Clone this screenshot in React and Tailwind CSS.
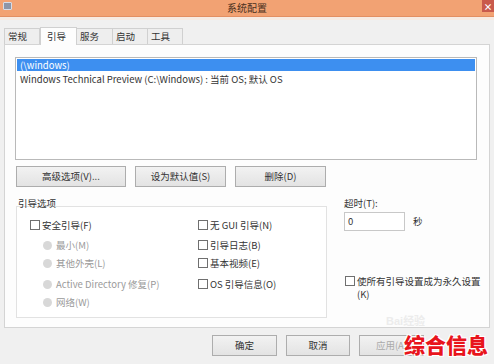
import React from "react";

const F = { fontFamily: '"Noto Sans CJK SC", "Liberation Sans", sans-serif' };

function Check({ className = "" }) {
  return <span className={"inline-block w-[10px] h-[10px] border border-[#6f6f6f] bg-white shrink-0 " + className} />;
}
function Radio() {
  return <span className="inline-block w-[9px] h-[9px] rounded-full bg-[#d8d8d8] shrink-0" />;
}
function Btn({ children, className = "" }) {
  return (
    <div className={"h-[21px] flex items-center justify-center border border-[#adadad] bg-gradient-to-b from-[#f2f2f2] to-[#e3e3e3] text-[9.5px] text-[#333] " + className}>
      {children}
    </div>
  );
}

export default function App() {
  return (
    <div className="w-[494px] h-[364px] bg-[#f0f0f0] flex flex-col overflow-hidden relative" style={F}>
      {/* title bar */}
      <div className="h-[17px] bg-[#f2a273] border-b border-[#e28f63] relative flex items-center justify-center shrink-0">
        <div className="absolute left-[3px] top-[2px] w-[9px] h-[8px] bg-[#8d96a8] border border-[#d8dce6] rounded-[1px]" />
        <span className="text-[10px] text-[#4a3020] leading-none">系统配置</span>
        <div className="absolute right-0 top-0 w-[12px] h-[12px] bg-[#c95a4c] flex items-center justify-center text-white text-[9px] leading-none font-bold">×</div>
      </div>
      <div className="h-[3px] bg-[#f7ebe3] shrink-0" />
      {/* tabs */}
      <div className="flex items-end pl-[4px] h-[24px] shrink-0">
        <div className="w-[36px] h-[16px] border border-b-0 border-[#d0d0d0] bg-[#eeeeee] text-[9.5px] text-[#333] flex items-center pl-[3px]">常规</div>
        <div className="w-[37px] h-[18px] border border-b-0 border-[#d0d0d0] bg-[#fdfdfd] text-[9.5px] text-[#333] flex items-center pl-[6px] relative z-10 -mb-px">引导</div>
        <div className="w-[36px] h-[16px] border border-b-0 border-l-0 border-[#d0d0d0] bg-[#eeeeee] text-[9.5px] text-[#333] flex items-center pl-[3px]">服务</div>
        <div className="w-[35px] h-[16px] border border-b-0 border-l-0 border-[#d0d0d0] bg-[#eeeeee] text-[9.5px] text-[#333] flex items-center pl-[3px]">启动</div>
        <div className="w-[35px] h-[16px] border border-b-0 border-l-0 border-[#d0d0d0] bg-[#eeeeee] text-[9.5px] text-[#333] flex items-center pl-[3px]">工具</div>
      </div>
      {/* panel */}
      <div className="ml-[4px] w-[486px] h-[284px] border border-[#d4d4d4] bg-[#fdfdfd] shrink-0 pl-[10px] pt-[12px] flex flex-col">
        {/* list */}
        <div className="w-[462px] h-[103px] border border-[#b9b9b9] bg-white p-px flex flex-col">
          <div className="h-[12px] bg-[#3d8ff0] text-white text-[9.5px] leading-[12px] pl-[3px]">{"(\\windows)"}</div>
          <div className="text-[9.5px] text-[#333] leading-[14px] pl-[3px] mt-px">Windows Technical Preview (C:\Windows) : 当前 OS; 默认 OS</div>
        </div>
        {/* buttons */}
        <div className="flex gap-[9px] mt-[6px] pl-[1px]">
          <Btn className="w-[110px]">高级选项(V)...</Btn>
          <Btn className="w-[91px]">设为默认值(S)</Btn>
          <Btn className="w-[91px]">删除(D)</Btn>
        </div>
        {/* lower */}
        <div className="flex mt-[10px]">
          <div className="flex flex-col">
            <div className="text-[9.5px] text-[#333] leading-[12px] pl-[3px] relative z-10">引导选项</div>
            <div className="ml-[1px] mt-[-3px] w-[311px] h-[112px] border border-[#e2e2e2] bg-white flex pt-[12px] text-[9.5px]">
              <div className="flex flex-col pl-[13px] w-[181px]">
                <div className="flex items-center gap-[2px] h-[12px] text-[#333]"><Check />安全引导(F)</div>
                <div className="flex flex-col pl-[13px] text-[#9a9a9a]">
                  <div className="flex items-center gap-[4px] h-[12px] mt-[8px]"><Radio />最小(M)</div>
                  <div className="flex items-center gap-[4px] h-[12px] mt-[6px]"><Radio />其他外壳(L)</div>
                  <div className="flex items-center gap-[4px] h-[12px] mt-[9px]"><Radio />Active Directory 修复(P)</div>
                  <div className="flex items-center gap-[4px] h-[12px] mt-[6px]"><Radio />网络(W)</div>
                </div>
              </div>
              <div className="flex flex-col text-[#333]">
                <div className="flex items-center gap-[2px] h-[12px]"><Check />无 GUI 引导(N)</div>
                <div className="flex items-center gap-[2px] h-[12px] mt-[8px]"><Check />引导日志(B)</div>
                <div className="flex items-center gap-[2px] h-[12px] mt-[6px]"><Check />基本视频(E)</div>
                <div className="flex items-center gap-[2px] h-[12px] mt-[9px]"><Check />OS 引导信息(O)</div>
              </div>
            </div>
          </div>
          <div className="flex flex-col ml-[17px] text-[9.5px] text-[#333]">
            <div className="leading-[12px]">超时(T):</div>
            <div className="flex items-center mt-[3px]">
              <div className="w-[61px] h-[19px] border border-[#c8c8c8] bg-white pl-[3px] flex items-center">0</div>
              <span className="ml-[8px]">秒</span>
            </div>
            <div className="flex items-start gap-[2px] mt-[44px] pl-[1px]">
              <Check className="mt-[1px]" />
              <div className="leading-[13px]">使所有引导设置成为永久设置<br />(K)</div>
            </div>
          </div>
        </div>
      </div>
      {/* bottom buttons */}
      <div className="flex pl-[212px] mt-[7px] gap-[9px]">
        <Btn className="w-[65px] border-[#7aa0c8]">确定</Btn>
        <Btn className="w-[64px]">取消</Btn>
        <Btn className="w-[65px] text-[#aaa]">应用(A)</Btn>
      </div>
      {/* watermark */}
      <div className="absolute left-[386px] top-[314px] text-[11px] text-[#ececec] font-bold leading-[12px]" style={{ fontFamily: '"Liberation Sans", sans-serif' }}>Bai<span style={F}>经验</span></div>
      <div
        className="absolute left-[404px] top-[333px] text-[21px] font-black text-[#e8141c] leading-[22px]"
        style={{ fontFamily: '"Noto Sans CJK SC", sans-serif', textShadow: "1px 1px 0 #fff, -1px -1px 0 #fff, 1px -1px 0 #fff, -1px 1px 0 #fff" }}
      >
        综合信息
      </div>
    </div>
  );
}
